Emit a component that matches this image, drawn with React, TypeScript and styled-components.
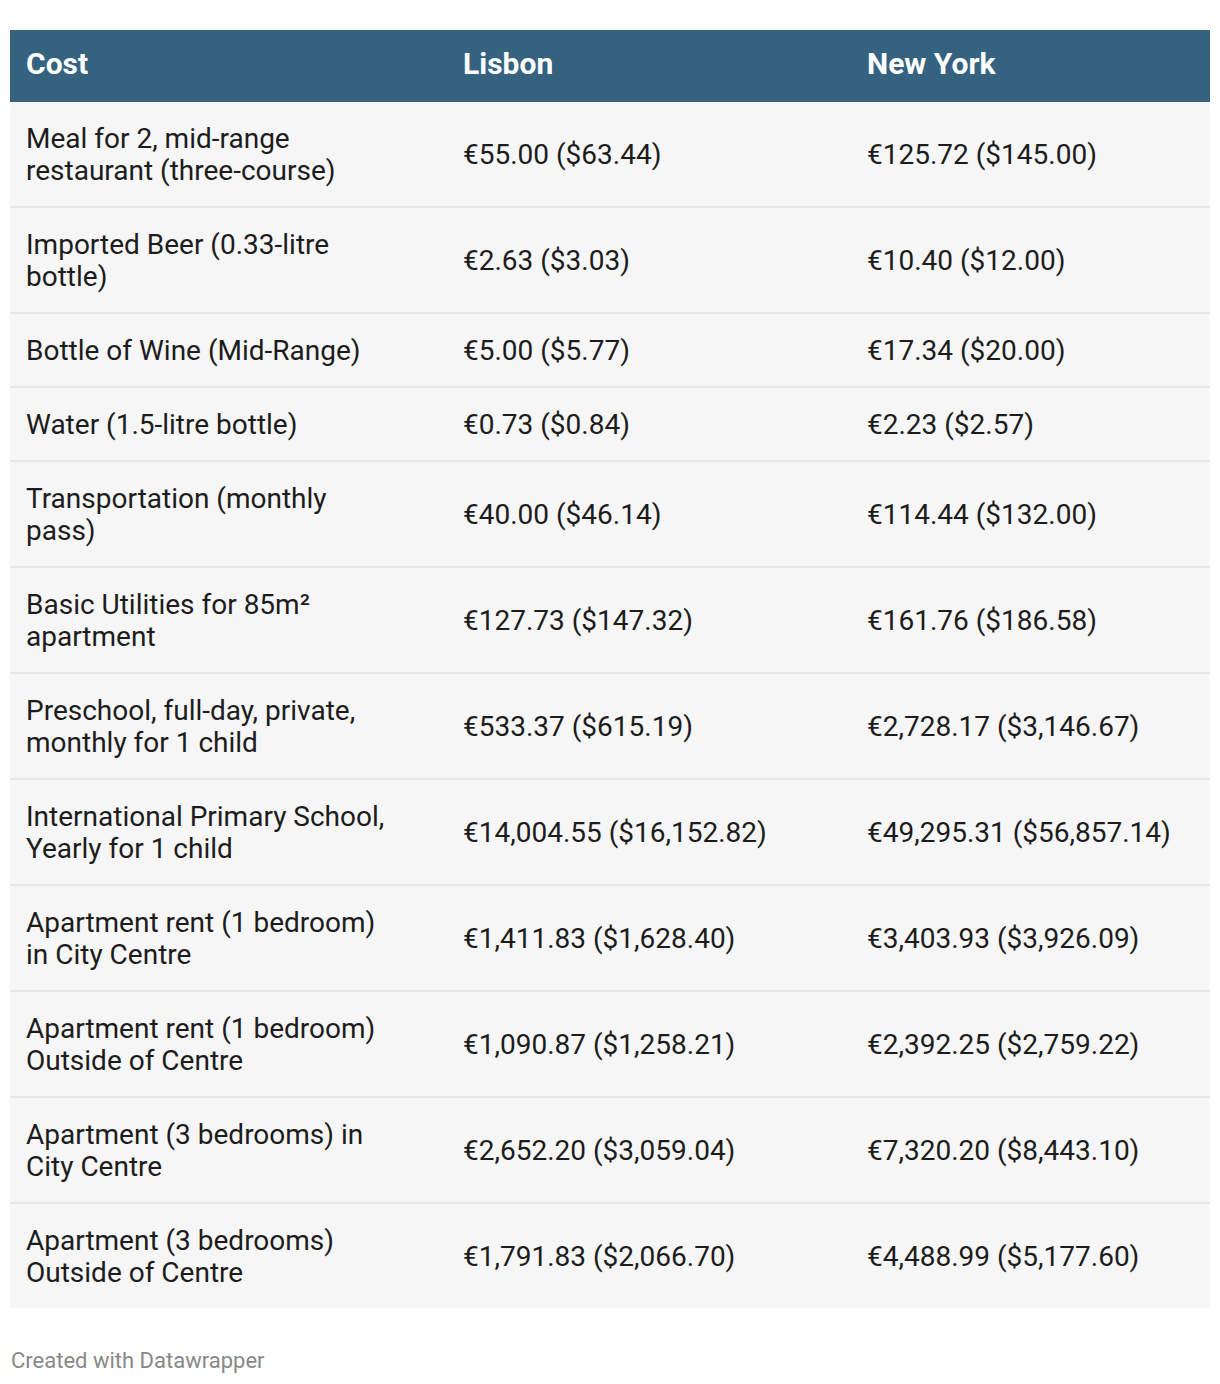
import React from "react";
import styled, { createGlobalStyle } from "styled-components";

const Global = createGlobalStyle`
  html, body { margin: 0; padding: 0; background: #ffffff; }
  body { font-family: Roboto, "Liberation Sans", Arial, sans-serif; }
`;

const Page = styled.div`
  padding: 30px 10px 0 10px;
  display: flex;
  flex-direction: column;
`;

const Table = styled.table`
  width: 1200px;
  border-collapse: collapse;
  table-layout: fixed;
`;

const Col = styled.col<{ $w: number }>`
  width: ${(p) => p.$w}px;
`;

const HeadCell = styled.th`
  background: #35637f;
  color: #ffffff;
  font-family: Roboto, "Liberation Sans", Arial, sans-serif;
  font-weight: 700;
  font-size: 30px;
  line-height: 32px;
  text-align: left;
  padding: 18px 16px 22px 16px;
`;

const Row = styled.tr`
  background: #f6f6f6;
  border-bottom: 2px solid #e6e6e6;
  &:last-child { border-bottom: none; }
`;

const Cell = styled.td`
  color: #1c1c1c;
  font-family: Roboto, "Liberation Sans", Arial, sans-serif;
  font-size: 28px;
  line-height: 32px;
  padding: 21px 16px 19px 16px;
  vertical-align: middle;
  white-space: nowrap;
`;

const LabelCell = styled(Cell)`
  white-space: normal;
  padding-right: 53px;
`;

const Footer = styled.div`
  margin-top: 40px;
  font-family: Roboto, "Liberation Sans", Arial, sans-serif;
  font-size: 22px;
  line-height: 26px;
  color: #888888;
  padding-left: 1px;
`;

const rows: [string, string, string][] = [
  ["Meal for 2, mid-range restaurant (three-course)", "€55.00 ($63.44)", "€125.72 ($145.00)"],
  ["Imported Beer (0.33-litre bottle)", "€2.63 ($3.03)", "€10.40 ($12.00)"],
  ["Bottle of Wine (Mid-Range)", "€5.00 ($5.77)", "€17.34 ($20.00)"],
  ["Water (1.5-litre bottle)", "€0.73 ($0.84)", "€2.23 ($2.57)"],
  ["Transportation (monthly pass)", "€40.00 ($46.14)", "€114.44 ($132.00)"],
  ["Basic Utilities for 85m² apartment", "€127.73 ($147.32)", "€161.76 ($186.58)"],
  ["Preschool, full-day, private, monthly for 1 child", "€533.37 ($615.19)", "€2,728.17 ($3,146.67)"],
  ["International Primary School, Yearly for 1 child", "€14,004.55 ($16,152.82)", "€49,295.31 ($56,857.14)"],
  ["Apartment rent (1 bedroom) in City Centre", "€1,411.83 ($1,628.40)", "€3,403.93 ($3,926.09)"],
  ["Apartment rent (1 bedroom) Outside of Centre", "€1,090.87 ($1,258.21)", "€2,392.25 ($2,759.22)"],
  ["Apartment (3 bedrooms) in City Centre", "€2,652.20 ($3,059.04)", "€7,320.20 ($8,443.10)"],
  ["Apartment (3 bedrooms) Outside of Centre", "€1,791.83 ($2,066.70)", "€4,488.99 ($5,177.60)"],
];

export default function App() {
  return (
    <>
      <Global />
      <Page>
        <Table>
          <colgroup>
            <Col $w={437} />
            <Col $w={404} />
            <Col $w={359} />
          </colgroup>
          <thead>
            <tr>
              <HeadCell>Cost</HeadCell>
              <HeadCell>Lisbon</HeadCell>
              <HeadCell>New York</HeadCell>
            </tr>
          </thead>
          <tbody>
            {rows.map(([a, b, c]) => (
              <Row key={a}>
                <LabelCell>{a}</LabelCell>
                <Cell>{b}</Cell>
                <Cell>{c}</Cell>
              </Row>
            ))}
          </tbody>
        </Table>
        <Footer>Created with Datawrapper</Footer>
      </Page>
    </>
  );
}
